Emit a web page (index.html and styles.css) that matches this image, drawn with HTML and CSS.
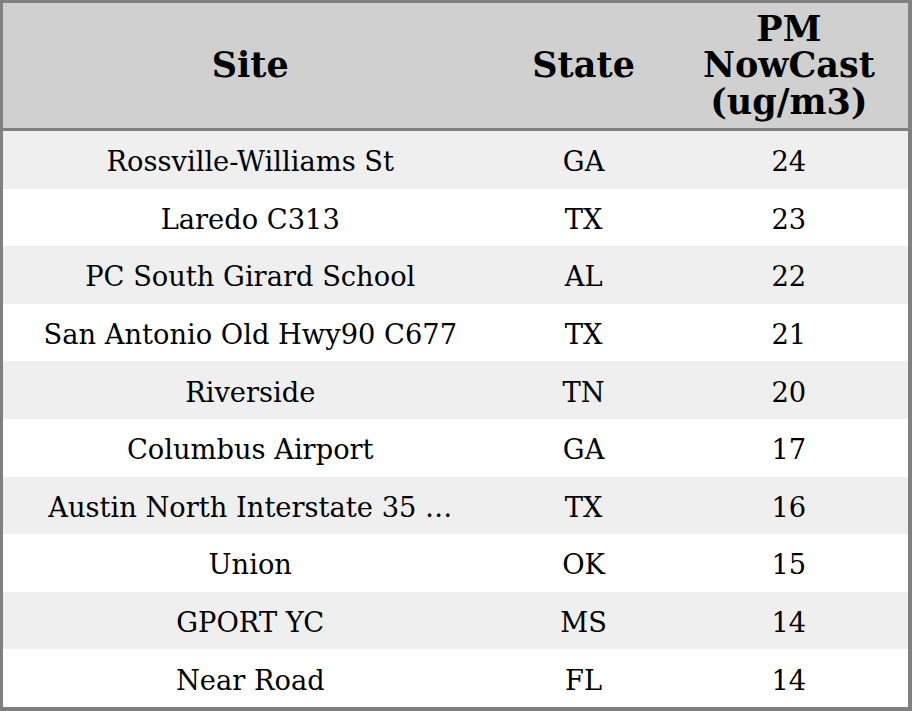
FILE: index.html
```html
<!DOCTYPE html>
<html>
<head>
<meta charset="utf-8">
<link rel="stylesheet" href="styles.css">
</head>
<body>
<table class="aq">
  <colgroup>
    <col class="c-site">
    <col class="c-state">
    <col class="c-pm">
  </colgroup>
  <thead>
    <tr class="head">
      <th>Site</th>
      <th>State</th>
      <th>PM<br>NowCast<br>(ug/m3)</th>
    </tr>
  </thead>
  <tbody>
    <tr class="odd"><td>Rossville-Williams St</td><td>GA</td><td>24</td></tr>
    <tr><td>Laredo C313</td><td>TX</td><td>23</td></tr>
    <tr class="odd"><td>PC South Girard School</td><td>AL</td><td>22</td></tr>
    <tr><td>San Antonio Old Hwy90 C677</td><td>TX</td><td>21</td></tr>
    <tr class="odd"><td>Riverside</td><td>TN</td><td>20</td></tr>
    <tr><td>Columbus Airport</td><td>GA</td><td>17</td></tr>
    <tr class="odd"><td>Austin North Interstate 35 …</td><td>TX</td><td>16</td></tr>
    <tr><td>Union</td><td>OK</td><td>15</td></tr>
    <tr class="odd"><td>GPORT YC</td><td>MS</td><td>14</td></tr>
    <tr><td>Near Road</td><td>FL</td><td>14</td></tr>
  </tbody>
</table>
</body>
</html>
```
FILE: styles.css
```css
html, body {
  margin: 0;
  padding: 0;
  background: #ffffff;
}
.aq {
  box-sizing: border-box;
  width: 912px;
  height: 711px;
  border-collapse: separate;
  border-spacing: 0;
  border-style: solid;
  border-color: #808080;
  border-width: 3px 4px 4px 3px;
  table-layout: fixed;
  font-family: "DejaVu Serif", serif;
  color: #000;
}
.c-site { width: 494px; }
.c-state { width: 172px; }
.c-pm { width: 238px; }
.head th {
  height: 125px;
  background: #d0d0d0;
  border-bottom: 3px solid #808080;
  font-size: 35px;
  font-weight: bold;
  line-height: 36.5px;
  text-align: center;
  vertical-align: middle;
  padding: 0;
}
td {
  height: 53.6px;
  padding: 4px 0 0;
  text-align: center;
  vertical-align: middle;
  font-size: 27.3px;
  white-space: nowrap;
}
tr.odd td {
  background: #efefef;
}
```
